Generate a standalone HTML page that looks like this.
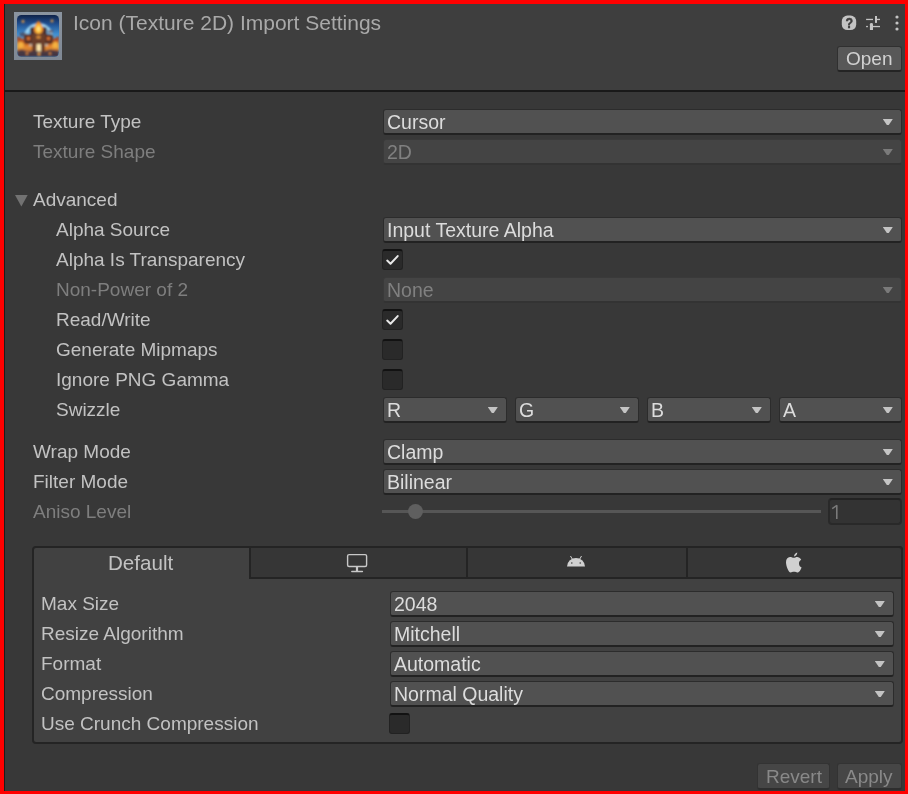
<!DOCTYPE html>
<html><head><meta charset="utf-8">
<style>
html,body{margin:0;padding:0;}
body{-webkit-font-smoothing:antialiased;width:908px;height:794px;background:#ff0000;position:relative;overflow:hidden;font-family:"Liberation Sans",sans-serif;}
.a{position:absolute;}
#win{position:absolute;left:4px;top:4px;width:901px;height:787px;box-sizing:border-box;border-left:1px solid #1b1b1b;background:#383838;}
#hdr{position:absolute;left:5px;top:4px;width:900px;height:86px;background:#3e3e3e;}
#sep{position:absolute;left:5px;top:90px;width:900px;height:2px;background:#191919;}
.t{position:absolute;will-change:transform;white-space:nowrap;font-size:19px;line-height:22px;height:22px;}
.lbl{color:#c2c2c2;}
.dis{color:#7e7e7e;}
.dd{position:absolute;box-sizing:border-box;height:26px;background:#515151;border:1px solid #2c2c2c;border-bottom:2px solid #222;border-radius:3px;}
.dd .v{position:absolute;will-change:transform;left:3px;top:0.5px;font-size:19.5px;line-height:22px;color:#dcdcdc;white-space:nowrap;}
.dd .ar{position:absolute;right:8px;top:8.7px;width:10.4px;height:6.8px;background:#c4c4c4;clip-path:polygon(0 0,100% 0,56% 100%,44% 100%);}
.dd.off{background:#444444;border-color:#3a3a3a;border-bottom-color:#333333;}
.dd.off .v{color:#808080;}
.dd.off .ar{background:#7a7a7a;}
.cb{position:absolute;box-sizing:border-box;width:21px;height:21px;background:#2a2a2a;border:1px solid #222;border-top:2px solid #121212;border-radius:3px;}
.cb svg{position:absolute;left:2px;top:2px;}
</style></head>
<body>
<div id="win"></div>
<div id="hdr"></div>
<div id="sep"></div>

<!-- asset icon -->
<div class="a" style="left:14px;top:12px;width:48px;height:48px;background:linear-gradient(180deg,#8a94a0,#7f8894);"></div>
<svg class="a" style="left:17px;top:15px" width="42" height="42" viewBox="0 0 42 42">
  <defs>
    <clipPath id="rc"><rect x="0" y="0" width="42" height="42" rx="4.5"/></clipPath>
    <filter id="bl" x="-10%" y="-10%" width="120%" height="120%"><feGaussianBlur stdDeviation="0.8"/></filter>
    <linearGradient id="sky" x1="0" y1="0" x2="0" y2="1"><stop offset="0" stop-color="#0f2248"/><stop offset="0.2" stop-color="#1f4c8c"/><stop offset="0.45" stop-color="#3f8ed0"/><stop offset="0.6" stop-color="#5aa8e0"/></linearGradient>
    <radialGradient id="dome" cx="0.5" cy="0.62" r="0.5"><stop offset="0" stop-color="#5cb0e8"/><stop offset="0.82" stop-color="#7cc4f0"/><stop offset="0.93" stop-color="#c8f0ff"/><stop offset="1" stop-color="#5aa0e0" stop-opacity="0"/></radialGradient>
    <radialGradient id="fl" cx="0.5" cy="0.62" r="0.55"><stop offset="0" stop-color="#fff4b0"/><stop offset="0.4" stop-color="#ffc840"/><stop offset="1" stop-color="#e86818"/></radialGradient>
    <linearGradient id="fire" x1="0" y1="0" x2="0" y2="1"><stop offset="0" stop-color="#8a3a28"/><stop offset="0.3" stop-color="#c85a22"/><stop offset="0.55" stop-color="#e89030"/><stop offset="0.8" stop-color="#a05a30"/><stop offset="1" stop-color="#3a3040"/></linearGradient>
  </defs>
  <g clip-path="url(#rc)">
    <rect width="42" height="42" fill="url(#sky)"/>
    <g filter="url(#bl)">
      <circle cx="21.5" cy="19" r="15" fill="url(#dome)"/>
      <path d="M0 21 L6 24 Q14 22 21 25 Q28 22 36 24 L42 21 L42 42 L0 42 Z" fill="url(#fire)"/>
      <path d="M1 28 Q4 25 7 29 L6 33 L1 33 Z" fill="#f4b040"/>
      <path d="M41 28 Q38 25 35 29 L36 33 L41 33 Z" fill="#f4b040"/>
      <path d="M13 27 L17 26 L18 31 L12 31 Z" fill="#b8e0f4" opacity="0.6"/>
      <path d="M26 26 L30 27 L31 31 L25 31 Z" fill="#b8e0f4" opacity="0.6"/>
      <path d="M2 18 L8 17 L10 20 L4 22 Z" fill="#4a3a48" opacity="0.7"/>
      <rect x="31" y="15" width="5" height="3" fill="#6a4040" opacity="0.7"/>
      <rect x="13" y="12" width="17" height="9" rx="2" fill="#4a3030"/>
      <rect x="7" y="19" width="9" height="10" rx="2.5" fill="#5a3226"/>
      <rect x="27" y="19" width="9" height="10" rx="2.5" fill="#5a3226"/>
      <rect x="10" y="22" width="3" height="3" fill="#d87030"/>
      <rect x="30" y="22" width="3" height="3" fill="#d87030"/>
      <rect x="15" y="19" width="13" height="11" fill="#6a3e2a"/>
      <rect x="19.5" y="21" width="4" height="2.5" fill="#e09038"/>
      <rect x="15" y="29" width="5" height="8" fill="#6a3a28"/>
      <rect x="23" y="29" width="5" height="8" fill="#6a3a28"/>
      <path d="M21.5 5.5 Q26.5 10.5 26 15 Q25.5 19 21.5 19 Q17.5 19 17 15 Q17 10 21.5 5.5 Z" fill="url(#fl)"/>
      <rect x="19.5" y="29" width="4.5" height="10" fill="#fff0b8" opacity="0.9"/>
      <path d="M0 36 L5 34.5 L11 37 L17 35.5 L26 37 L33 34.5 L42 36 L42 42 L0 42 Z" fill="#3e3444" opacity="0.9"/>
      <circle cx="10" cy="38.5" r="1.2" fill="#e08838"/>
      <circle cx="22" cy="39" r="1.4" fill="#f0a040"/>
      <circle cx="33" cy="38.5" r="1.2" fill="#e08838"/>
      <circle cx="6" cy="6.5" r="1.4" fill="#f0a040"/>
      <circle cx="35" cy="6" r="1.4" fill="#f0a040"/>
    </g>
  </g>
</svg>
<div class="t" style="left:73px;top:11px;font-size:21px;line-height:24px;color:#a9a9a9;">Icon (Texture 2D) Import Settings</div>

<!-- header icons -->
<svg class="a" style="left:841px;top:15px;will-change:transform" width="16" height="16" viewBox="0 0 16 16">
  <rect x="0.8" y="0.5" width="14.4" height="14.6" rx="5.6" fill="#c4c4c4"/>
  <g transform="translate(8.2 0) scale(0.8 1)"><text x="0" y="13.4" text-anchor="middle" font-family="Liberation Sans" font-weight="bold" font-size="15.5" fill="#3e3e3e" stroke="#3e3e3e" stroke-width="0.5">?</text></g>
</svg>
<svg class="a" style="left:865px;top:15px" width="16" height="16" viewBox="0 0 16 16">
  <rect x="1.1" y="3.8" width="6.9" height="1.3" fill="#c4c4c4"/>
  <rect x="10" y="1" width="2" height="6.9" fill="#c4c4c4"/>
  <rect x="12" y="3.8" width="3" height="1.3" fill="#c4c4c4"/>
  <rect x="1.1" y="10.9" width="1.8" height="1.3" fill="#c4c4c4"/>
  <path d="M4.9 15 L4.9 9.3 Q4.9 8.1 6.4 8.1 Q8 8.1 8 9.3 L8 15 Z" fill="#c4c4c4"/>
  <rect x="8" y="10.9" width="7" height="1.3" fill="#c4c4c4"/>
</svg>
<svg class="a" style="left:893px;top:14px" width="8" height="18" viewBox="0 0 8 18">
  <circle cx="4" cy="3" r="1.6" fill="#c4c4c4"/>
  <circle cx="4" cy="9" r="1.6" fill="#c4c4c4"/>
  <circle cx="4" cy="15" r="1.6" fill="#c4c4c4"/>
</svg>

<!-- Open button -->
<div class="a" style="left:837px;top:46px;width:65px;height:26px;box-sizing:border-box;background:#585858;border:1px solid #303030;border-bottom:2px solid #242424;border-radius:3px;"></div>
<div class="t" style="left:846px;top:48px;color:#d2d2d2;">Open</div>

<!-- Texture type rows -->
<div class="t lbl" style="left:33px;top:111px;">Texture Type</div>
<div class="dd" style="left:383px;top:109px;width:519px;"><span class="v">Cursor</span><span class="ar"></span></div>
<div class="t dis" style="left:33px;top:141px;">Texture Shape</div>
<div class="dd off" style="left:383px;top:139px;width:519px;"><span class="v">2D</span><span class="ar"></span></div>

<!-- Advanced -->
<svg class="a" style="left:14px;top:194px" width="15" height="14" viewBox="0 0 15 14"><path d="M1 1 L13.7 1 L7.35 12.4 Z" fill="#727272"/></svg>
<div class="t lbl" style="left:33px;top:189px;">Advanced</div>

<div class="t lbl" style="left:56px;top:219px;">Alpha Source</div>
<div class="dd" style="left:383px;top:217px;width:519px;"><span class="v">Input Texture Alpha</span><span class="ar"></span></div>

<div class="t lbl" style="left:56px;top:249px;">Alpha Is Transparency</div>
<div class="cb" style="left:382px;top:249px;"><svg width="17" height="17" viewBox="0 0 17 17"><path d="M2.2 7.6 L5.5 10.7 L12.7 3.1" stroke="#e8e8e8" stroke-width="2" stroke-linecap="round" stroke-linejoin="round" fill="none"/></svg></div>

<div class="t dis" style="left:56px;top:279px;">Non-Power of 2</div>
<div class="dd off" style="left:383px;top:277px;width:519px;"><span class="v">None</span><span class="ar"></span></div>

<div class="t lbl" style="left:56px;top:309px;">Read/Write</div>
<div class="cb" style="left:382px;top:309px;"><svg width="17" height="17" viewBox="0 0 17 17"><path d="M2.2 7.6 L5.5 10.7 L12.7 3.1" stroke="#e8e8e8" stroke-width="2" stroke-linecap="round" stroke-linejoin="round" fill="none"/></svg></div>

<div class="t lbl" style="left:56px;top:339px;">Generate Mipmaps</div>
<div class="cb" style="left:382px;top:339px;"></div>

<div class="t lbl" style="left:56px;top:369px;">Ignore PNG Gamma</div>
<div class="cb" style="left:382px;top:369px;"></div>

<div class="t lbl" style="left:56px;top:399px;">Swizzle</div>
<div class="dd" style="left:383px;top:397px;width:124px;"><span class="v">R</span><span class="ar"></span></div>
<div class="dd" style="left:515px;top:397px;width:124px;"><span class="v">G</span><span class="ar"></span></div>
<div class="dd" style="left:647px;top:397px;width:124px;"><span class="v">B</span><span class="ar"></span></div>
<div class="dd" style="left:779px;top:397px;width:123px;"><span class="v">A</span><span class="ar"></span></div>

<div class="t lbl" style="left:33px;top:441px;">Wrap Mode</div>
<div class="dd" style="left:383px;top:439px;width:519px;"><span class="v">Clamp</span><span class="ar"></span></div>
<div class="t lbl" style="left:33px;top:471px;">Filter Mode</div>
<div class="dd" style="left:383px;top:469px;width:519px;"><span class="v">Bilinear</span><span class="ar"></span></div>

<div class="t dis" style="left:33px;top:501px;">Aniso Level</div>
<div class="a" style="left:382px;top:510px;width:439px;height:3px;background:#565656;"></div>
<div class="a" style="left:408px;top:504px;width:15px;height:15px;border-radius:50%;background:#5f5f5f;"></div>
<div class="a" style="left:828px;top:498px;width:74px;height:27px;box-sizing:border-box;background:#333333;border:2px solid #292929;border-top-color:#232323;border-radius:4px;"></div>
<svg class="a" style="left:829px;top:503px" width="12" height="18" viewBox="0 0 12 18"><path d="M7.8 2.2 L7.8 15.9" stroke="#7a7a7a" stroke-width="1.6"/><path d="M7.9 2.4 L3.2 5.6" stroke="#7a7a7a" stroke-width="1.5"/></svg>

<!-- Platform tabs -->
<div class="a" style="left:32px;top:546px;width:871px;height:198px;box-sizing:border-box;background:#414141;border:2px solid #242424;border-radius:4px;"></div>
<div class="a" style="left:249px;top:546px;width:654px;height:33px;box-sizing:border-box;background:#363636;border:2px solid #242424;border-top-right-radius:4px;"></div>
<div class="a" style="left:466px;top:548px;width:2px;height:30px;background:#242424;"></div>
<div class="a" style="left:686px;top:548px;width:2px;height:30px;background:#242424;"></div>
<div class="t lbl" style="left:108px;top:552px;font-size:20.6px;">Default</div>

<svg class="a" style="left:345px;top:552px" width="24" height="22" viewBox="0 0 24 22">
  <rect x="2.6" y="2.6" width="19" height="11.9" rx="1.5" fill="none" stroke="#c8c8c8" stroke-width="1.4"/>
  <rect x="10.9" y="15" width="2.2" height="4.5" fill="#c8c8c8"/>
  <rect x="6.1" y="18.7" width="12" height="1.5" rx=".7" fill="#c8c8c8"/>
</svg>
<svg class="a" style="left:565px;top:553px" width="22" height="16" viewBox="0 0 22 16">
  <path d="M2 13.5 A9 8.5 0 0 1 20 13.5 Z" fill="#d0d0d0"/>
  <path d="M5.5 3 L7.5 6.5 M16.5 3 L14.5 6.5" stroke="#d0d0d0" stroke-width="1"/>
  <circle cx="6.8" cy="10" r="0.75" fill="#363636"/>
  <circle cx="15.2" cy="10" r="0.75" fill="#363636"/>
</svg>
<svg class="a" style="left:784px;top:551px" width="20" height="23" viewBox="0 0 20 23">
  <path d="M10 6.8 C8.6 6.8 7.6 6 6 6 C3.6 6 2 8.2 2 11.2 C2 15 4.6 21.5 6.6 21.5 C7.8 21.5 8.4 20.8 10 20.8 C11.6 20.8 12.2 21.5 13.4 21.5 C15.2 21.5 16.8 18.6 17.6 16.4 C15.9 15.7 15 14.2 15 12.4 C15 10.8 15.8 9.5 17.2 8.7 C16.2 6.9 14.6 6 13.2 6 C11.8 6 11 6.8 10 6.8 Z" fill="#d0d0d0"/>
  <path d="M10 5.6 C10.1 3.6 11.5 2 13.3 1.6 C13.2 3.6 11.8 5.3 10 5.6 Z" fill="#d0d0d0"/>
</svg>

<div class="t lbl" style="left:41px;top:593px;">Max Size</div>
<div class="dd" style="left:390px;top:591px;width:504px;"><span class="v">2048</span><span class="ar"></span></div>
<div class="t lbl" style="left:41px;top:623px;">Resize Algorithm</div>
<div class="dd" style="left:390px;top:621px;width:504px;"><span class="v">Mitchell</span><span class="ar"></span></div>
<div class="t lbl" style="left:41px;top:653px;">Format</div>
<div class="dd" style="left:390px;top:651px;width:504px;"><span class="v">Automatic</span><span class="ar"></span></div>
<div class="t lbl" style="left:41px;top:683px;">Compression</div>
<div class="dd" style="left:390px;top:681px;width:504px;"><span class="v">Normal Quality</span><span class="ar"></span></div>
<div class="t lbl" style="left:41px;top:713px;">Use Crunch Compression</div>
<div class="cb" style="left:389px;top:713px;"></div>

<!-- bottom buttons -->
<div class="a" style="left:757px;top:763px;width:73px;height:27px;box-sizing:border-box;background:#464646;border:1px solid #333333;border-bottom:2px solid #2e2e2e;border-radius:3px;"></div>
<div class="t" style="left:766px;top:766px;color:#898989;">Revert</div>
<div class="a" style="left:837px;top:763px;width:65px;height:27px;box-sizing:border-box;background:#464646;border:1px solid #333333;border-bottom:2px solid #2e2e2e;border-radius:3px;"></div>
<div class="t" style="left:845px;top:766px;color:#898989;">Apply</div>

<!-- red frame on top -->
<div class="a" style="left:0;top:0;width:908px;height:4px;background:#f00;"></div>
<div class="a" style="left:0;top:0;width:4px;height:794px;background:#f00;"></div>
<div class="a" style="left:905px;top:0;width:3px;height:794px;background:#f00;"></div>
<div class="a" style="left:0;top:791px;width:908px;height:3px;background:#f00;"></div>
</body></html>
